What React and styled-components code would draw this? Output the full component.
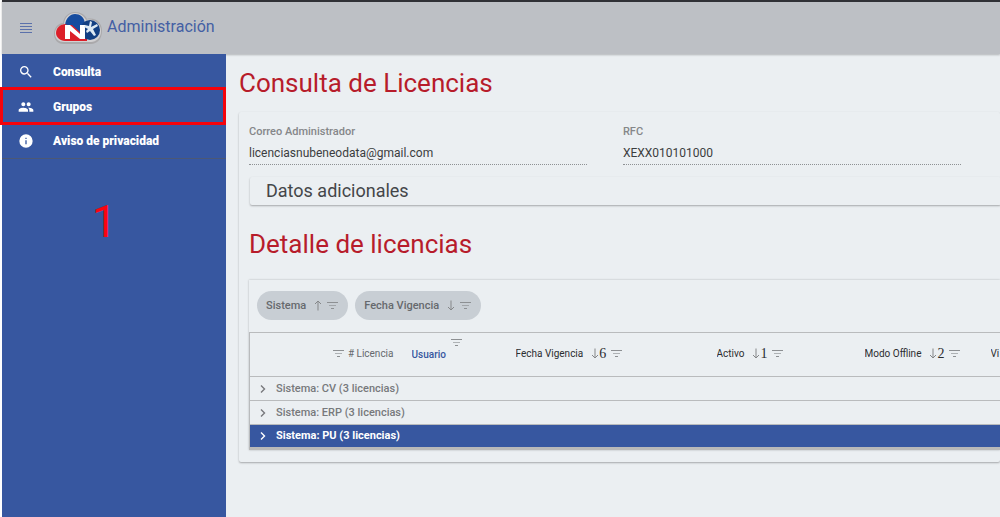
import React from "react";
import styled, { createGlobalStyle } from "styled-components";

const Global = createGlobalStyle`
  * { box-sizing: border-box; }
  body { margin: 0; background: #ebeff2; font-family: Roboto, "Liberation Sans", sans-serif; overflow-x: hidden; }
`;

const Page = styled.div`
  min-height: 100vh;
  display: flex;
  flex-direction: column;
  border-left: 2px solid #fff;
`;
const Header = styled.header`
  height: 54px;
  display: flex;
  align-items: center;
  padding-left: 18px;
  background: #bdc0c5;
  border-top: 2px solid #303136;
  box-shadow: 0 1px 2px rgba(0, 0, 0, 0.25);
`;
const MenuButton = styled.button`
  display: flex;
  border: 0;
  padding: 0 0 2px;
  background: none;
  color: #5b71ab;
`;
const Brand = styled.a`
  display: flex;
  align-items: center;
  gap: 4px;
  margin-left: 21px;
  color: #445fa4;
  font-size: 16px;
  line-height: 20px;
  text-decoration: none;
`;
const BrandName = styled.span`
  padding-bottom: 2px;
`;
const Body = styled.div`
  flex: 1;
  display: flex;
`;
const Sidebar = styled.nav`
  flex: 0 0 224px;
  background: #3757a0;
`;
const NavLink = styled.a`
  position: relative;
  display: flex;
  align-items: center;
  gap: 19px;
  height: 35px;
  padding-left: 16px;
  color: #fff;
  font-size: 12px;
  font-weight: 900;
  line-height: 16px;
  text-decoration: none;
  border-bottom: ${(p) => (p.$last ? "1px solid #4c5875" : "0")};
  svg { width: 16px; height: 16px; fill: #fff; }
`;
const Highlight = styled.span`
  position: absolute;
  inset: -2px 0 -1px -2px;
  border: 3px solid #f4030b;
`;
const Step = styled.p`
  margin: 39px 0 0;
  padding-left: 90px;
  color: #fb0510;
  font-size: 44px;
  font-weight: 400;
  line-height: 48px;
`;
const Main = styled.main`
  flex: 1;
  min-width: 0;
  padding: 13px 0 0 13px;
`;
const Title = styled.h1`
  margin: 0;
  color: #b71c2b;
  font-size: 26px;
  font-weight: 400;
  line-height: 32px;
`;
const Panel = styled.section`
  margin-top: 13px;
  padding: 12px 0 12px 10px;
  border-radius: 2px;
  box-shadow: 0 1px 2px 0 rgba(0, 0, 0, 0.3);
`;
const Fields = styled.div`
  display: grid;
  grid-template-columns: 45% 45%;
  gap: 36px;
`;
const Field = styled.label`
  display: flex;
  flex-direction: column;
  gap: 2px;
  color: #858789;
  font-size: 11px;
  font-weight: 500;
  line-height: 16px;
`;
const Input = styled.input`
  height: 23px;
  padding: 0;
  border: 0;
  border-bottom: 1px dotted #8e9194;
  background: none;
  color: #3b3d40;
  font: 400 12px/16px Roboto, sans-serif;
  outline: 0;
`;
const Expander = styled.button`
  display: block;
  width: 100%;
  height: 28px;
  margin: 12px 0 0 1px;
  padding: 0 0 0 16px;
  border: 0;
  border-radius: 2px;
  background: none;
  box-shadow: 0 1px 2px rgba(0, 0, 0, 0.3);
  color: #444649;
  font: 400 18px/28px Roboto, sans-serif;
  text-align: left;
`;
const Subtitle = styled(Title).attrs({ as: "h2" })`
  margin-top: 23px;
`;
const Grid = styled.div`
  margin-top: 20px;
  box-shadow: 0 0 2px 0 rgba(0, 0, 0, 0.25);
`;
const Chips = styled.div`
  display: flex;
  gap: 7px;
  padding: 11px 0 12px 8px;
`;
const Chip = styled.button`
  display: flex;
  align-items: center;
  height: 29px;
  padding: 0 10px 0 9px;
  border: 0;
  border-radius: 15px;
  background: #c8ced4;
  color: #66696d;
  font: 500 11px/16px Roboto, sans-serif;
`;
const Arrow = styled.svg`
  width: 8px;
  height: 11px;
  margin-left: 8px;
  fill: none;
  stroke: #858789;
`;
const FilterIcon = styled.svg`
  flex: none;
  width: 11px;
  height: 9px;
  margin-left: ${(p) => (p.$lead ? 0 : 5)}px;
  fill: none;
  stroke: #8d9093;
`;
const Table = styled.table`
  width: 100%;
  table-layout: fixed;
  border-collapse: collapse;
  border: 1px solid #b9bbbd;
  border-right: 0;
  border-bottom: 3px solid #b9b9b9;
`;
const Col = styled.col`
  width: ${(p) => p.$w};
`;
const Th = styled.th`
  height: 44px;
  padding: 0 0 2px;
  color: #2b2d30;
  font-size: 10px;
  font-weight: 400;
  white-space: nowrap;
  overflow: hidden;
`;
const Head = styled.div`
  display: flex;
  align-items: center;
  justify-content: ${(p) => (p.$end ? "flex-end" : "flex-start")};
  gap: ${(p) => (p.$end ? 4 : 0)}px;
  padding-right: ${(p) => (p.$end ? 18 : 0)}px;
  line-height: 16px;
  color: ${(p) => (p.$end ? "#66696d" : "inherit")};
`;
const UserHead = styled(Head)`
  align-items: flex-start;
  padding-bottom: 6px;
  color: #3757a0;
  font-weight: 500;
  span { padding-top: 9px; }
`;
const Order = styled.span`
  font-family: "Liberation Serif", serif;
  font-size: 14px;
`;
const Td = styled.td`
  height: 24px;
  padding: 0;
  border-top: 1px solid #b9bbbd;
  background: ${(p) => (p.$on ? "#3757a0" : "transparent")};
  color: ${(p) => (p.$on ? "#fff" : "#77797c")};
  font-size: 11px;
  font-weight: ${(p) => (p.$on ? 700 : 500)};
`;
const Group = styled.div`
  display: flex;
  align-items: center;
  gap: 10px;
  padding-left: 9px;
  line-height: 16px;
  svg { width: 7px; height: 8px; fill: none; stroke: currentColor; stroke-width: 1.4; }
`;

const Sort = ({ up }) => (
  <Arrow viewBox="0 0 8 11">
    <path d={up ? "M4 10.5V1M1 4L4 1L7 4" : "M4 .5V10M1 7L4 10L7 7"} />
  </Arrow>
);
const Filter = ({ lead }) => (
  <FilterIcon viewBox="0 0 11 9" $lead={lead}>
    <path d="M0 1.5H11" />
    <path d="M2 4.5H9" opacity=".65" />
    <path d="M4 7.5H7" />
  </FilterIcon>
);

const Logo = () => (
  <svg width="50" height="34" viewBox="0 0 50 34" aria-hidden="true">
    <path d="M11 33C4 33 1 28 1 23C1 17 5 12 10 12C11 5 16 1 22 1C28 1 32 4 34 8C43 6 49 12 49 20C49 28 44 33 38 33Z" fill="#aaa9ab" />
    <path d="M11 31C6 31 2 28 2 22C2 17 7 14 11 13C12 6 16 2 22 2C27 2 31 5 33 9C41 7 48 13 48 20C48 27 43 31 38 31Z" fill="#d2d1d3" />
    <path d="M12 14C13 7 17 3 22 3C27 3 31 6 32 12L27 22L15 15Z" fill="#164c9f" />
    <path d="M13 13C7 13 3 17 3 22C3 26 7 30 12 30H34V14Z" fill="#dc1f29" />
    <path d="M12 14C16 12 24 11 33 11L33 16L28 22L19 14Z" fill="#164c9f" />
    <circle cx="37" cy="19" r="10" fill="#123f83" />
    <path d="M12 28V14H17L27 23V14H32V28H27L17 20V28Z" fill="#fff" />
    <path d="M37 10L39 11L38 16L44 13L45 15L40 18L43 24L41 25L37 20L34 22L33 20L35 18L31 16L32 14L36 15Z" fill="#dce9f4" />
  </svg>
);

const icons = {
  search: "M15.5 14h-.79l-.28-.27A6.47 6.47 0 0 0 16 9.5 6.5 6.5 0 1 0 9.5 16c1.61 0 3.09-.59 4.23-1.57l.27.28v.79l5 4.99L20.49 19l-4.99-5zm-6 0C7.01 14 5 11.99 5 9.5S7.01 5 9.5 5 14 7.01 14 9.5 11.99 14 9.5 14z",
  group: "M16 11c1.66 0 2.99-1.34 2.99-3S17.66 5 16 5s-3 1.34-3 3 1.34 3 3 3zm-8 0c1.66 0 2.99-1.34 2.99-3S9.66 5 8 5 5 6.34 5 8s1.34 3 3 3zm0 2c-2.33 0-7 1.17-7 3.5V19h14v-2.5C15 14.17 10.33 13 8 13zm8 0c-.29 0-.62.02-.97.05 1.16.84 1.97 1.97 1.97 3.45V19h6v-2.5c0-2.33-4.67-3.5-7-3.5z",
  info: "M12 2a10 10 0 1 0 0 20 10 10 0 0 0 0-20zm1 15h-2v-6h2v6zm0-8h-2V7h2v2z",
};
const Icon = ({ name }) => (
  <svg viewBox="0 0 24 24"><path d={icons[name]} /></svg>
);

const sorted = [
  ["Fecha Vigencia", "6"],
  ["Activo", "1"],
  ["Modo Offline", "2"],
];
const groups = ["CV", "ERP", "PU"];

export default function App() {
  return (
    <Page>
      <Global />
      <Header>
        <MenuButton aria-label="Menú">
          <svg width="12" height="11" viewBox="0 0 12 11" stroke="currentColor"><path d="M0 1.5H12M0 4.5H12M0 7.5H12M0 10.5H12" /></svg>
        </MenuButton>
        <Brand href="#">
          <Logo />
          <BrandName>Administración</BrandName>
        </Brand>
      </Header>
      <Body>
        <Sidebar>
          <NavLink href="#consulta"><Icon name="search" />Consulta</NavLink>
          <NavLink href="#grupos"><Icon name="group" />Grupos<Highlight /></NavLink>
          <NavLink href="#aviso" $last><Icon name="info" />Aviso de privacidad</NavLink>
          <Step>1</Step>
        </Sidebar>
        <Main>
          <Title>Consulta de Licencias</Title>
          <Panel>
            <Fields>
              <Field>Correo Administrador<Input defaultValue="licenciasnubeneodata@gmail.com" /></Field>
              <Field>RFC<Input defaultValue="XEXX010101000" /></Field>
            </Fields>
            <Expander>Datos adicionales</Expander>
            <Subtitle>Detalle de licencias</Subtitle>
            <Grid>
              <Chips>
                <Chip>Sistema<Sort up /><Filter /></Chip>
                <Chip>Fecha Vigencia<Sort /><Filter /></Chip>
              </Chips>
              <Table>
                <colgroup>
                  <Col $w="162px" /><Col $w="104px" /><Col $w="201px" /><Col $w="148px" /><Col $w="126px" /><Col $w="auto" />
                </colgroup>
                <thead>
                  <tr>
                    <Th><Head $end><Filter lead /># Licencia</Head></Th>
                    <Th><UserHead><span>Usuario</span><Filter /></UserHead></Th>
                    {sorted.map(([name, order]) => (
                      <Th key={name}><Head>{name}<Sort /><Order>{order}</Order><Filter /></Head></Th>
                    ))}
                    <Th><Head>Vi</Head></Th>
                  </tr>
                </thead>
                <tbody>
                  {groups.map((g) => (
                    <tr key={g}>
                      <Td colSpan={6} $on={g === "PU"}>
                        <Group>
                          <svg viewBox="0 0 7 8"><path d="M2 .5L5.5 4L2 7.5" /></svg>
                          Sistema: {g} (3 licencias)
                        </Group>
                      </Td>
                    </tr>
                  ))}
                </tbody>
              </Table>
            </Grid>
          </Panel>
        </Main>
      </Body>
    </Page>
  );
}
